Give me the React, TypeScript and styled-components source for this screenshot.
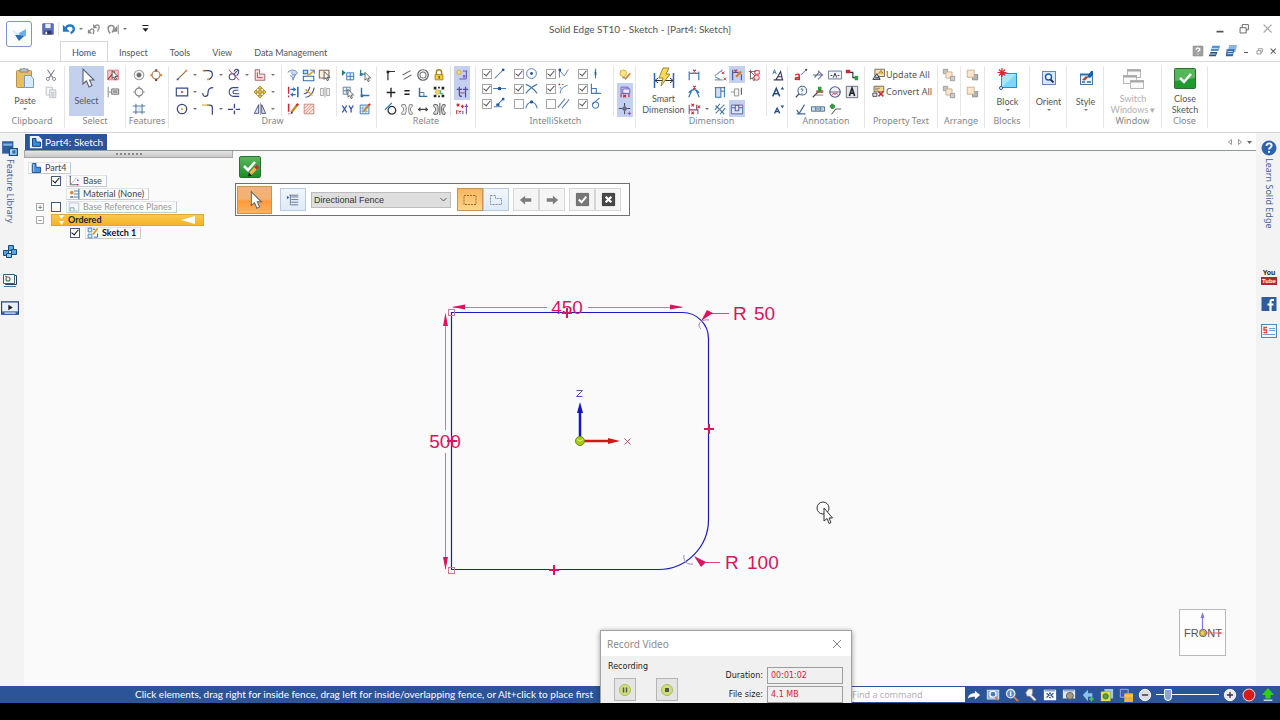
import React from 'react';
import styled, { createGlobalStyle, css } from 'styled-components';

/* ---------- palette and base ---------- */

const c = {
  brand: '#2b5499',
  navy: '#3b4684',
  blue: '#2a70b4',
  red: '#cf2632',
  orange: '#e08a35',
  gold: '#d9a92c',
  green: '#2f9b3a',
  magenta: '#d8155f',
};

const ui = `Lato, "Noto Sans", sans-serif`;
const label = `"Noto Sans", "Open Sans", sans-serif`;

const GlobalStyle = createGlobalStyle`
  * { box-sizing: border-box; }
  body { margin: 0; background: #000; font-family: ${ui}; }
  button, input, select { font-family: inherit; margin: 0; }
`;

/* ---------- icon data: [path, stroke, fill, stroke width, dashes] ---------- */

type Part = [string, string, string?, number?, string?];

const circ = (x: number, y: number, r: number) =>
  `M${x - r} ${y}a${r} ${r} 0 1 0 ${2 * r} 0a${r} ${r} 0 1 0 ${-2 * r} 0z`;
const rect = (x: number, y: number, w: number, h: number) => `M${x} ${y}h${w}v${h}h${-w}z`;
const cursor = (x: number, y: number) =>
  `M${x} ${y}v9l2 -2l1.5 3.5l1.5 -.7l-1.5 -3.3h3z`;

const icons: Record<string, Part[]> = {
  save: [[rect(2, 2, 12, 12), '#4a5ca8', '#5b6fbe'], [rect(5, 2, 6, 5), 'none', '#e9edfb'], [rect(4, 10, 8, 4), 'none', '#2b3566'], [rect(5, 11, 2, 3), 'none', '#fff']],
  undo: [['M4 8c2 -6 10 -5 9.500 1c-.5 2 -2 3 -3.500 4', '#1f78c8', 'none', 2.6], ['M1 3v8h8z', 'none', '#1f78c8']],
  undoAll: [['M3 11c1 -4 4 -4 5 -1l-1 4', '#8c8c8c', 'none', 1.5], ['M9 6c1 -4 5 -3 5 0l-2 5', '#8c8c8c', 'none', 1.5], ['M1 8v5h5z', 'none', '#8c8c8c'], ['M7 2v5h5z', 'none', '#8c8c8c']],
  redo: [['M5 13c-4 -4 -3 -9 1 -9c4 0 4 4 1 8', '#8c8c8c', 'none', 1.8], ['M13 4v7h-6z', 'none', '#8c8c8c'], ['M14 3v11', '#8c8c8c']],
  customize: [['M5 4h7', '#222', 'none', 1.2], ['M5 7h7l-3.500 4z', 'none', '#222']],
  cut: [['M4 2l6 9M12 2l-6 9', '#7d8087', 'none', 1.2], [circ(4.5, 12.5, 1.8), '#7d8087'], [circ(11.5, 12.5, 1.8), '#7d8087']],
  copy: [[rect(2.5, 2.5, 7, 9), '#b5bac2', '#f7f8fa'], [rect(6.5, 5.5, 7, 9), '#b5bac2', '#eef0f4'], ['M8 8.5h4M8 10.5h4M8 12.5h4', '#b5bac2']],
  selectFilter: [['M2 2.500h12v11h-12z', '#e06670', '#f6c9cd'], ['M2 13l8 -9', c.red, 'none', 1.3], [cursor(7, 3), '#333', '#fff', 0.9]],
  selectBox: [['M2.5 2v12M3 8h3', '#777'], [rect(6.5, 4.5, 8, 6), '#666', '#ddd'], [rect(8, 6, 5, 3), 'none', '#999']],
  hole: [[circ(8, 8, 5.5), '#a0a0a0', '#f2f2f2', 1.2], [circ(8, 8, 2.4), '#777', '#666']],
  pattern: [[circ(8, 8, 4.6), '#a87b5c', 'none', 1.3], [rect(7, 1.5, 2.4, 2.4), 'none', '#7a3d18'], [rect(7, 12.5, 2.4, 2.4), 'none', '#7a3d18'], [rect(1.5, 7, 2.4, 2.4), 'none', c.orange], [rect(12.5, 7, 2.4, 2.4), 'none', c.orange]],
  hub: [[circ(8, 8, 4.4), '#8a8a8a', '#fafafa', 1.3], ['M8 1.500v2M8 12.500v2M1.500 8h2M12.500 8h2', '#888', 'none', 1.4]],
  frame: [['M4.5 2v12M11.5 2v12M1 4.500h14M1 11.500h14', '#56789c', 'none', 1.2], [rect(6, 6, 4, 4), 'none', '#dbeafa']],
  line: [['M3 13l10 -10', '#9a7448', 'none', 1.4], [rect(2, 12, 2, 2), 'none', c.navy], [rect(12, 2, 2, 2), 'none', c.orange]],
  rectangle: [[rect(1.500, 3.500, 13, 9), c.navy, '#fff', 1.3], [rect(7, 7, 2, 2), 'none', c.red]],
  circle: [[circ(8, 8, 5.4), c.navy, 'none', 1.4], [rect(7, 7, 2, 2), 'none', c.orange]],
  arc: [['M3 3h5c7 0 6 8 1 10', c.navy, 'none', 1.4], [rect(2, 2, 2.500, 2), 'none', c.orange], [rect(7, 12, 2, 2), 'none', c.orange]],
  curve: [['M2 9c0 6 6 5 6 0c0 -5 3 -6 6 -6', c.navy, 'none', 1.4]],
  fillet: [['M7 3.500h3c2 0 3 1 3 3v8', c.navy, 'none', 1.4], ['M1 3.500h8', c.gold, 'none', 1.3]],
  trim: [[circ(6, 10, 3.500), c.navy, 'none', 1.2], ['M2 2l12 12', '#c05070', 'none', 1.2], ['M8 7l5 -5M8 4c2 -4 7 -3 5 2l-2 3', c.navy, 'none', 1.2]],
  offset: [['M13 3h-6c-6 1 -6 9 0 10h7M13 6h-4c-3 1 -3 4 0 4h5', c.navy, 'none', 1.2]],
  split: [['M8.500 2v5M8.500 10v4M1 8.500h6M10 8.500h5', c.navy, 'none', 1.5]],
  polyOffset: [['M2.500 2h5v5h6v7h-11z', '#a0606c', '#fae3e5', 1.1], ['M5 5v6h6', c.red]],
  move: [['M8 1l3 3h-2v3h3v-2l3 3l-3 3v-2h-3v3h2l-3 3l-3 -3h2v-3h-3v2l-3 -3l3 -3v2h3v-3h-2z', '#8a6d12', '#e8c43c', 0.8]],
  mirror: [['M6.500 3v10h-5zM10 3v10h4.500z', c.navy, '#dfe6f4', 1], ['M8.500 1v14', '#777', 'none', 0.8]],
  freehand: [['M2 5c4 -5 11 -2 11 1c-2 3 -8 2 -6 -1M5 8c2 4 5 4 5 0M7 11l1 3l3 -7', '#7b93c1', '#cbd8f2', 1.1]],
  cleanSketch: [[rect(1.500, 2.500, 5, 4), '#2e6eb0', '#c2ddf6', 1.2], [rect(1.500, 9.500, 12, 5), '#2e6eb0', '#fff', 1.2], ['M6 9l8 -6', c.gold, 'none', 2], ['M9 2.500h5v4', c.blue]],
  copySketch: [[rect(1.500, 2.500, 11, 9), '#865', '#fdf2df', 1.2], [cursor(7, 4), '#333', '#fff', 0.9]],
  stretch: [['M3 2v8M3 12v2', c.red, 'none', 1.6], ['M13.500 2v12', c.blue, 'none', 1.8], ['M5 5h6M5 11h6M8 3l3 2l-3 2M8 9l-2 2l2 2', c.blue, 'none', 1.2]],
  scale: [['M2 10c4 0 6 -4 7 -8M4 14c5 0 9 -5 10 -11', '#4c5ca0', 'none', 1.3], ['M4 5l8 7', c.gold, 'none', 1.6]],
  rotate: [['M3 4h3v8h-3zM10 4h3v8h-3zM8 2v12', '#aaa', 'none', 1.2]],
  pencil: [['M3 2v9M3 13v1', c.red, 'none', 1.8], ['M6 12l7 -9', '#c98a2c', 'none', 2.8], ['M5 14l1 -3l2 1.500z', 'none', '#333'], ['M12 4l2 -2', c.red, 'none', 2.4]],
  hatch: [[rect(2.500, 2.500, 11, 11), '#c27f74', '#fff0ea'], ['M3 7l4 -4M3 11l8 -8M4 13l9 -9M8 13l5 -5', '#d06a5c', 'none', 0.9]],
  gridGo: [['M1 2v7l4.500 -3.500z', 'none', '#178a80'], [rect(6.500, 5.500, 8, 8), c.blue, '#eef6ff'], ['M10.500 6v8M7 9.500h8', c.blue]],
  gridPick: [[rect(2.500, 2.500, 8, 8), '#56749c', '#eef6ff'], ['M6.500 3v7M3 6.500h7', '#56749c'], [cursor(8, 5), '#333', '#fff', 0.8]],
  xy: [['M1.500 4l5 8M6.500 4l-5 8M9 4l2.500 4l2.500 -4M11.500 8v4', '#2f4fae', 'none', 1.5]],
  originPick: [['M3 2v5h6', '#178a80', 'none', 1.4], [rect(2, 6, 3, 3), 'none', c.blue], [cursor(8, 5), '#333', '#fff', 0.8]],
  origin: [['M4 3v9h9', c.blue, 'none', 1.6], [rect(3, 11, 3, 3), 'none', c.blue]],
  gridEdit: [[rect(2.500, 3.500, 10, 10), c.blue, '#eef6ff'], ['M5.500 4v9M9 4v9M3 7h9M3 10.500h9', '#6c94c4', 'none', 0.8], ['M6 11l7 -8', '#c98a2c', 'none', 2.2], ['M12 4l2 -2', c.red, 'none', 2]],
  connect: [['M4.500 14v-10h8', '#333', 'none', 1.4], [rect(3, 3, 3, 3), 'none', '#222']],
  parallel: [['M3 8l9 -5M4 13l9 -5', '#666', 'none', 1.3]],
  concentric: [[circ(8, 8, 6), '#5d6068', 'none', 1.4], [circ(8, 8, 3.5), '#6d7078', 'none', 1.2]],
  lock: [['M5 8v-3c0 -4 6 -4 6 0v3', '#a98413', 'none', 1.6], [rect(3.500, 7.500, 9, 6), '#a98413', '#f0cb3c'], [rect(7.500, 9, 1.500, 3), 'none', '#65500f']],
  plus: [['M8 3v11M3 8.500h10', '#222', 'none', 1.6]],
  equal: [['M5 6.500h6M5 10.500h6', '#222', 'none', 1.7]],
  perp: [['M4 3v10h9', '#2d6f9f', 'none', 1.6], ['M4 8.500h5v4', '#2d6f9f']],
  rigid: [['M2 2h3v3h-3zM11 2h3v3h-3zM2 11h3v3h-3zM11 11h3v3h-3zM7 2h2v2h-2zM7 12h2v2h-2z', 'none', '#222'], [circ(6.500, 8, 2.500), c.gold, '#f0dd80'], ['M10 6v4h3', '#2a6', 'none', 1.3]],
  tangent: [[circ(9, 9.500, 4.4), '#333', 'none', 1.5], ['M1 9l8 -8', '#2b7bb8', 'none', 1.5]],
  symmetric: [['M2 3h4l1 3v5l-1 3h-4v-2l2 -2v-3l-2 -2zM14 3h-3l-1 3v5l1 3h3v-2l-2 -2v-3l2 -2z', '#777', '#f2f2f2', 1]],
  collinear: [['M3 8.500h10M5 6.500l-2 2l2 2M11 6.500l2 2l-2 2', '#444', 'none', 1.4]],
  symmetricAxis: [['M2 3h4l1 3v5l-1 3h-4v-2l2 -2v-3l-2 -2zM15 3h-3l-1 3v5l1 3h3v-2l-2 -2v-3l2 -2z', '#555', '#ddd', 1], ['M9 1v14', '#333']],
  relHandles: [['M9 3.500h5M13 3v9M5 12.500h8', '#6b54b5', 'none', 1.2], [circ(4.500, 5, 2.500), c.gold, '#f3dc84'], [rect(9, 8, 3, 3), 'none', '#8968d0']],
  relKeep: [['M5 2v9c0 2 1 2 3 2M2 5h6M12 2v12M9 5h6', '#514aa3', 'none', 1.4], ['M6 9h5', '#b052b0', 'none', 1.4]],
  relAssist: [['M2 2l3 3M5 2l-3 3M7 5h3M8.500 3v4', c.red, 'none', 1.4], ['M13 2v12M11 5h4M9 10v4', '#7850a0', 'none', 1.2], ['M2 9v5M4 10l3 3M7 10l-3 3', c.red, 'none', 1.2]],
  endpoint: [['M2 14l10 -10', '#5b81b8', 'none', 1.3], [rect(11, 2, 3, 3), 'none', '#235a9d']],
  center: [[circ(8, 8, 6), '#4a7cb8', 'none', 1.2], [circ(8, 8, 1.800), 'none', '#235a9d']],
  keyPoint: [['M3 13v-9l6 7l5 -8', '#5b81b8', 'none', 1.2], [rect(2, 2, 3, 3), 'none', '#235a9d']],
  vertical: [['M8 2v12', '#4a7cb8', 'none', 1.5], [rect(7, 6, 2, 4), 'none', '#235a9d']],
  midpoint: [['M0 8h16', '#4a7cb8', 'none', 1.3], [circ(8, 8, 2.3), 'none', '#235a9d']],
  intersect: [['M1 3c6 2 9 5 14 11M15 3c-6 2 -9 5 -14 11', '#4a7cb8', 'none', 1.5]],
  extend: [['M4 14c0 -6 4 -8 9 -10', '#4a7cb8', 'none', 1.2], [rect(2, 2, 2, 2), 'none', c.red], ['M6 3h2M4 6v2', '#555']],
  perpRel: [['M3 2v12h12M3 8h6v6', '#4a7cb8', 'none', 1.4]],
  pointOn: [['M1 12h10M5 10l7 -7', '#4a7cb8', 'none', 1.4], [rect(11, 1, 3, 3), 'none', '#235a9d'], [rect(4, 8, 4, 3), 'none', '#235a9d']],
  silhouette: [['M1 14c2 -10 12 -10 14 0', '#4a7cb8', 'none', 1.4], [circ(8, 6, 2), 'none', '#235a9d']],
  parallelRel: [['M1 13l9 -11M6 14l9 -11', '#5b81b8', 'none', 1.3]],
  tangentRel: [[circ(8, 10, 3.800), '#4a7cb8', 'none', 1.4], ['M4 9l9 -8', '#4a7cb8', 'none', 1.4]],
  bulbEdit: [[circ(6, 6, 3.800), c.gold, '#fbe68a'], ['M5 11h3', '#888', 'none', 1.500], ['M8 13l6 -7', '#c98a2c', 'none', 2]],
  alignDim: [[rect(3.500, 2.500, 8, 7), '#6b54b5', '#d9d2f4'], [rect(5.500, 4.500, 8, 5), '#6b54b5', '#eceaff'], ['M6 11l3 3M9 11l-3 3M3.500 10v4M12.500 10v4', c.red, 'none', 1.3]],
  crossHair: [['M7.500 1v13M1 7.500h13', '#4a4a66', 'none', 1.2], ['M4 7.500l3.500 -3.500l3.500 3.500l-3.500 3.500z', 'none', '#6a6a84'], ['M13 11v4M11 13h4', '#8d44a6']],
  dimDistance: [['M2.500 4v10M13.500 4v10', c.blue, 'none', 1.3], ['M3 6h10', '#333'], ['M7 2l3 3M10 2l-3 3', c.red, 'none', 1.3]],
  dimAngle: [['M2 14l4 -9M14 14l-4 -9M2 9c4 -5 8 -5 12 0', '#2a70b4', 'none', 1.3], ['M7 1l3 3M10 1l-3 3', c.red, 'none', 1.3]],
  dimCoord: [['M2.500 9h10v5M2.500 3v11M11 3v6', '#8c4b70', 'none', 1.2], ['M5 2l3 3M8 2l-3 3M5 11l3 3M8 11l-3 3M12 4l3 3M15 4l-3 3', c.red, 'none', 1.2]],
  dimChamfer: [['M2 9l9 -7M2 13.500h9M2 10l6 3', '#7a9cc0', 'none', 1.3], ['M10 4l3 3M13 4l-3 3M12 11l3 3M15 11l-3 3', c.red, 'none', 1.1]],
  dimSymmetric: [['M3 3v11h6v-11M13 2v12', '#3478b0', '#cfe2f4', 1.2], ['M2 3h12M9 7h4', '#555']],
  dimCross: [['M3 13l10 -10M3 4l10 10', '#6d7f95', 'none', 1.4], ['M2 9l6 -7M8 14l6 -7', c.blue, 'none', 1.2]],
  dimAttach: [['M3 2v12M13 7v7M3 5h7', '#46569f', 'none', 1.3], ['M5 2l3 3M8 2l-3 3', c.red, 'none', 1.3], ['M7 10l6 -6', '#dc7a27', 'none', 2.4]],
  dimRemove: [['M1 8h4M5 4.500h5v8h-5z', '#888', '#f4f4f4'], ['M13 3v8', '#555', 'none', 1.2]],
  dimRetrieve: [[rect(1.500, 3.500, 13, 10), '#54629e', '#dfe4fb'], ['M6 3v7h4v-7M2 6.500h4M10 6.500h4', '#54629e', 'none', 1.2], ['M7 4h2', c.red]],
  dimPick: [['M2 4h8M4 2v5', '#777', 'none', 1.3], [cursor(4, 4), '#333', '#fff', 0.8], ['M9 3h5v4h-5z', c.red], [circ(11, 11, 3), c.red, '#fadcdc']],
  textStyle: [['M2 7l2 -5l2 5M3 5h2', '#2a70b4', 'none', 1], ['M6 13l5 -9l2 9M8 10h5M3 13.500h11', '#39395f', 'none', 1.3]],
  textUp: [['M2 13l4 -9l4 9M4 10h5', '#274c86', 'none', 1.800], ['M11 5h4l-2 -3z', 'none', '#274c86']],
  textDown: [['M4 13l3 -6l3 6M5 11h4', '#274c86', 'none', 1.500], ['M11 4h4l-2 3z', 'none', '#274c86']],
  leader: [['M8 8l6 -6', '#6b7fa8', 'none', 1.2], ['M1.500 8.500c1 -2 4.500 -2 4.500 0v5.500M6 10.500c-6 0 -6 4.500 0 2', c.red, 'none', 1.7], [rect(13, 1, 2, 2), 'none', '#333']],
  weld: [['M2 8h12M8 3l5 5l-5 5M4 11l5 -6', '#5a6d8d', 'none', 1.2]],
  datum: [[rect(0.500, 3.500, 15, 9), '#5a6d8d', '#f4f7fb'], ['M6 11l2 -5l2 5M3 8.500h2M11 8.500h2', '#333', 'none', 1.1]],
  connector: [['M5 5h4v6h4', '#333', 'none', 1.3], [rect(1, 2, 5, 4), 'none', c.red], [rect(11, 9, 4, 5), 'none', c.green]],
  balloon: [[circ(9.5, 6.5, 5), '#4a6a94', '#f2f7fc', 1.2], ['M8 5.500c0 -2 3 -1 2 .5l-1 1.500M9 9v1', '#345', 'none', 1], ['M6 10l-4 4', '#345', 'none', 1.3]],
  callout: [['M2 14l6 -6', '#345', 'none', 1.300], [rect(6, 6, 8, 3), 'none', '#c0584a'], [rect(8, 2, 4, 6), 'none', c.green], ['M5 11.500h9', '#777']],
  datumTarget: [[circ(8, 8, 6), '#4a5a84', '#f6f8fd', 1.3], ['M2 8h12', '#4a5a84'], ['M5 11l1.500 -2l1.500 2l1.500 -2l1.500 2', c.red]],
  textBox: [[rect(1.500, 1.500, 13, 13), '#667', '#dfe6ee', 1], ['M5 12.500l3 -9l3 9M6 9.500h4', '#222', 'none', 1.800]],
  surface: [['M3 9l3 4l6 -10M3 13.500h10', '#44689a', 'none', 1.3]],
  frameTol: [[rect(0.500, 5.500, 15, 5), '#3e6282', '#cfe0ee'], ['M5.500 6v4M10.500 6v4M7 8h2M12 8h1', '#3e6282', 'none', 1.2]],
  edge: [['M4 14l5 -6h6', '#666', 'none', 1.3], [rect(3.500, 2, 3, 6), 'none', c.green], [rect(2, 3.500, 6, 3), 'none', c.green]],
  updateAll: [[rect(3.500, 1.500, 12, 9), '#555', '#fbe3a8'], ['M8 7l3 -4l3 4', '#777', '#f0b030'], ['M1 14l5 -7l4 7zM4 12h5', '#333', '#bdd3ee', 1.2]],
  convertAll: [[rect(2.500, 1.500, 12, 7), '#555', '#fbd98a'], ['M4 4h6M4 6h4', '#777'], ['M8 8l6 6M14 8l-6 6', c.red, 'none', 1.8], ['M1 10h5v4h-5z', '#333', '#e8e8e8']],
  bringFront: [[rect(1.500, 1.500, 5, 5), '#999', '#c4c4c4'], [rect(4.500, 4.500, 7, 7), '#c9a988', '#fbe7cf'], [rect(9.500, 9.500, 5, 5), '#999', '#ccc']],
  sendBack: [[rect(8.500, 7.500, 6, 6), '#888', '#b4b4b4'], [rect(2.500, 2.500, 8, 8), '#c9a988', '#fbe7cf']],
  partFile: [['M3 2h5v5h6v7h-11z', '#123f7c', '#4a90d9', 1.1], ['M3 2l2 2v9', '#bfe0ff']],
  docFile: [['M1 1h10l4 4v10h-14z', 'none', '#e9f2fb'], ['M4 4h4v4h5v5h-9z', '#123f7c', '#3f8ad6', 1.1]],
  baseIcon: [['M3 3v10h9', '#556', 'none', 1.2], ['M4 12l8 -9', '#9d62c6', 'none', 1, '2 1'], [rect(12, 12, 2, 2), 'none', c.magenta], [rect(2, 1, 2, 2), 'none', c.blue], [rect(12, 6, 2, 2), 'none', '#6a5acd']],
  material: [['M8 4h6M8 8h6M8 12h6', '#2a70b4', 'none', 1.2], [circ(5, 6, 2.5), 'none', c.orange], ['M3 12h4', '#333', 'none', 1.5], ['M14.500 1v14', '#1d5591', 'none', 1.2]],
  planes: [[rect(1.500, 2.500, 13, 11), '#a9b7cc', '#f4f7fb'], ['M3 13v-4h5v4', '#6d86ae']],
  sketchItem: [[rect(1.500, 1.500, 5, 5), '#2a70b4', '#dcecfb'], [rect(1.500, 9.500, 5, 5), '#2a70b4', '#dcecfb'], ['M9 13.500h5v-5', '#2a70b4', 'none', 1.3], ['M8 10l6 -8', '#e0962c', 'none', 2.400], ['M8 3h3', '#333']],
  list: [['M6 4.500h8M6 7.500h8M6 10.500h8M6 13.500h8', '#5a6c8e'], ['M5 2v12', '#5a6c8e'], ['M1 3l3 2l-3 2z', 'none', '#2a70b4'], ['M4 2.500h10', '#5a6c8e']],
  fence: [['M2 3.500h12v9h-12z', '#a0672a', 'none', 1, '2 1']],
  polyFence: [['M2.500 3.500h5v3h6v6h-11z', '#7a8fae', 'none', 1, '2 1']],
  back: [['M1 8l6 -5v3h7v4h-7v3z', 'none', '#7d7d7d']],
  forward: [['M15 8l-6 -5v3h-7v4h7v3z', 'none', '#7d7d7d']],
  accept: [[rect(1.500, 1.500, 13, 13), '#686868', '#777'], ['M4 8l3 3l5 -6', '#fff', 'none', 2.200]],
  cancel: [[rect(1.500, 1.500, 13, 13), '#333', '#484848'], ['M5 5l6 6M11 5l-6 6', '#fff', 'none', 2.400]],
  help: [[rect(2.500, 2.500, 11, 11), '#888', '#a2a2a2'], ['M6 6.500c0 -3 4.500 -2 4 0c0 1 -2 1 -2 2.500M8 11v1', '#fff', 'none', 1.5]],
  winBack: [['M6 2h9l-2 6h-9z', 'none', '#4d8fd0'], ['M4 9h8l-2 5h-8z', 'none', '#26547c'], ['M5 5h8M3 11.500h7', '#dfeaf6']],
  winFront: [['M6 1h9l-2 8h-9z', 'none', '#8bb4df'], ['M3 6h9l-2 8h-8z', 'none', '#2d68ac'], ['M4 8.500h6M4 11h6', '#e6f1fc']],
  minimize: [['M4 11h8', '#555', 'none', 2]],
  restore: [[rect(3.500, 6.500, 7, 6), '#666', '#fff', 1.1], ['M6 6v-3h7v6h-3', '#666', 'none', 1.1]],
  close: [['M3 3l9 9M12 3l-9 9', '#aaa', 'none', 1.6]],
  closeDark: [['M3 3l9 9M12 3l-9 9', '#555', 'none', 1.8]],
  share: [['M1 12c1 -5 4 -6 8 -6v-3l6 5l-6 5v-3c-3 0 -5 0 -8 2z', 'none', '#fff']],
  zoomArea: [[rect(1.500, 2.500, 13, 10), '#cfe0f5', '#8eb3de', 1.2], [circ(8, 7, 3.500), '#fff', '#4a7dbb', 1.4], ['M10 10l4 4', '#d57c50', 'none', 2]],
  zoom: [[circ(6.500, 6.500, 4.800), '#e1eaf6', '#5f8cc4', 1.500], ['M6.500 4v5', '#fff', 'none', 1.500], ['M10 10l5 5', '#d57c50', 'none', 2.2]],
  pan: [['M2 5l3 -4h5v5l-1 2l5 5l-2 2l-5 -5l-4 -1z', '#777', '#f1f1f1', 1]],
  fit: [[rect(1, 2, 14, 12), 'none', '#fff'], ['M2 3h12', '#8fa7cc', 'none', 2], ['M4 6l3 2l-3 3M12 6l-3 2l3 3M7 6h2M7 11h2', c.brand, 'none', 1.5]],
  rotateView: [[rect(1, 2, 14, 10), 'none', '#dfe7f4'], ['M2 3h12', '#8fa7cc', 'none', 2], [circ(9, 9, 4), '#555', '#a39a88']],
  views: [['M2 8l6 -6v4h5v4h-5v5z', 'none', '#8cc3ee'], ['M12 10v5M9.500 12.500h5', '#4fc34f', 'none', 2]],
  styleView: [['M5 1h10v11h-3v-8h-7z', 'none', '#9cc8f2'], [rect(1, 4, 11, 11), 'none', '#e7dd3b'], [circ(6.500, 9.500, 3), '#2a7a2a', '#4ca644']],
  windows: [[rect(1.500, 1.500, 9, 9), '#a9bcd8', '#3d629f'], [rect(6, 6, 10, 10), 'none', '#eeb13a'], ['M6 9h10', '#fadf9c']],
  zoomOut: [[circ(8, 8, 6.5), '#fff', '#dadde2'], ['M4.500 8h7', '#555', 'none', 2]],
  zoomIn: [[circ(8, 8, 6.5), '#fff', '#e8eaf0'], ['M4.500 8h7M8 4.500v7', '#333', 'none', 1.5]],
  record: [[circ(8, 8, 6.8), '#f2c2c2', '#d91a1a', 1.2]],
  upload: [['M8 0l7 8h-4v4h-6v-4h-4z', 'none', '#2fd116'], ['M3 14h10', '#d8f0d4', 'none', 1.5]],
  railLibrary: [[rect(1, 2, 10, 11), 'none', '#2b5f9e'], ['M2 5h8', '#7fb2e4', 'none', 2], [rect(7.500, 8.500, 7, 6), '#1d4c86', '#bfe0fa', 1.2], [rect(10, 10, 3, 3), 'none', c.blue]],
  railParts: [[rect(6.500, 1.500, 5, 5), '#174a7c', '#5aa6e0'], [rect(9.500, 5.500, 5, 5), '#174a7c', '#5aa6e0'], [rect(1.500, 6.500, 5, 5), '#174a7c', '#5aa6e0'], [rect(4.500, 9.500, 5, 4), '#174a7c', '#8cc8f2']],
  railSensors: [[rect(3.500, 3.500, 11, 9), '#246', '#fff'], [rect(1.500, 2.500, 11, 9), '#3a5f86', '#eef5fb'], [circ(6, 7, 2), '#2a8a4a', '#fff', 1.2], ['M3 4l2 1', c.red], ['M2 14.500h12', '#4a7d9c']],
  railVideo: [[rect(0.500, 2.500, 15, 11), '#24456e', '#e8f1fa'], ['M6.500 5l4 2.500l-4 2.500z', 'none', '#222'], [rect(1, 11, 14, 3), 'none', '#2b5f9e'], ['M3 12.500h10', '#fff']],
  learn: [[circ(8, 8, 7), '#2b5fa8', '#2d62b0'], ['M5.500 6c0 -4 6 -3 5 0c0 1.500 -2.500 1.500 -2.500 3.500M8 11v1.800', '#fff', 'none', 1.9]],
  facebook: [[rect(0.500, 1, 15, 14), 'none', '#2f5c9d'], ['M13 4h-2c-1 0 -1.500 .5 -1.500 2v9M6.500 8.500h6', '#fff', 'none', 2.2]],
  news: [[rect(0.500, 1.500, 15, 13), '#4a8abf', '#f3faff', 1.2], ['M6 4.500h-3v2.500h2.500v2.500h-3', '#d2502a', 'none', 1.3], ['M8 5.500h6M8 7.500h6M2 11.500h12', '#6aa3d0']],
};

const Svg = styled.svg`
  display: block;
  flex: none;
`;

const Icon = ({ name, size = 16 }: { name: string; size?: number }) => (
  <Svg width={size} height={size} viewBox="0 0 16 16" aria-hidden="true">
    {icons[name].map(([d, stroke, fill = 'none', w = 1, dash], i) => (
      <path key={i} d={d} stroke={stroke} fill={fill} strokeWidth={w} strokeDasharray={dash} />
    ))}
  </Svg>
);

/* ---------- shared controls ---------- */

const plain = css`
  appearance: none;
  border: 0;
  padding: 0;
  background: none;
  display: flex;
  align-items: center;
  justify-content: center;
`;

const IconButton = styled.button<{ $on?: boolean; $w?: number }>`
  ${plain}
  width: ${(p) => p.$w ?? 16}px;
  height: 17px;
  flex: none;
  background: ${(p) => (p.$on ? '#c3d0f0' : 'transparent')};
`;

const Caret = styled.span`
  display: block;
  width: 0;
  border: 2px solid transparent;
  border-top-color: #777;
  border-bottom: 0;
`;

const Check = styled.input<{ $soft?: boolean }>`
  appearance: none;
  flex: none;
  width: 10px;
  height: 10px;
  margin: 0;
  border: 1px solid ${(p) => (p.$soft ? '#a5a5a5' : '#445a7c')};
  background: #fff;
  display: flex;
  align-items: center;
  justify-content: center;
  &:checked::before {
    content: '';
    width: 3px;
    height: 6px;
    margin-bottom: 2px;
    border: solid ${(p) => (p.$soft ? '#555' : '#111')};
    border-width: 0 1px 1px 0;
    transform: rotate(40deg);
  }
`;

const Tool = ({ name, on, w }: { name: string; on?: boolean; w?: number }) => (
  <IconButton type="button" aria-label={name} $on={on} $w={w}>
    <Icon name={name} size={14} />
  </IconButton>
);

/* ---------- window frame ---------- */

const Page = styled.div`
  min-height: 100vh;
  display: flex;
  flex-direction: column;
  padding: 16px 0 17px;
  background: #000;
`;

const Window = styled.div`
  position: relative;
  flex: 1;
  display: flex;
  flex-direction: column;
  background: #fff;
  overflow: hidden;
`;

const Header = styled.header`
  display: flex;
  flex-direction: column;
  height: 46px;
  border-bottom: 1px solid #d5d7dc;
`;

const AppButton = styled.button`
  ${plain}
  position: absolute;
  top: 5px;
  left: 6px;
  width: 26px;
  height: 26px;
  border: 1px solid #7b98c4;
  border-radius: 3px;
  background: #fbfdff;
`;

const TitleBar = styled.div`
  display: grid;
  grid-template-columns: 1fr auto 1fr;
  align-items: center;
  height: 26px;
`;

const QuickAccess = styled.div`
  display: flex;
  align-items: center;
  gap: 2px;
  padding-left: 40px;
`;

const Rule = styled.span`
  width: 1px;
  height: 14px;
  flex: none;
  background: #e3e3e3;
`;

const Title = styled.h1`
  margin: 0;
  font-size: 10px;
  font-weight: 400;
  color: #555;
  white-space: nowrap;
`;

const WindowButtons = styled.div<{ $gap: number; $end?: number }>`
  display: flex;
  justify-content: flex-end;
  align-items: center;
  gap: ${(p) => p.$gap}px;
  padding-right: ${(p) => p.$end ?? 0}px;
`;

const TabRow = styled.div`
  display: flex;
  align-items: stretch;
  justify-content: space-between;
  height: 20px;
  padding-left: 60px;
`;

const Tabs = styled.nav`
  display: flex;
`;

const Tab = styled.a<{ $active?: boolean }>`
  display: flex;
  align-items: center;
  padding: 2px 11px 0;
  height: 20px;
  font-size: 9px;
  color: ${(p) => (p.$active ? '#2b5499' : '#555')};
  text-decoration: none;
  ${(p) =>
    p.$active &&
    css`
      border: 1px solid #d5d7dc;
      border-bottom: 0;
      background: #fff;
      margin-bottom: -1px;
    `}
`;

/* ---------- ribbon ---------- */

const Ribbon = styled.div`
  display: flex;
  height: 71px;
  padding: 4px 0;
  border-bottom: 1px solid #d3d6d8;
  background: #fff;
`;

const Group = styled.section<{ $w: number }>`
  display: flex;
  flex-direction: column;
  flex: 0 0 ${(p) => p.$w}px;
  border-right: 1px solid #e6e6e6;
`;

const GroupBody = styled.div<{ $pad?: number }>`
  display: flex;
  height: 50px;
  padding-left: ${(p) => p.$pad ?? 4}px;
`;

const GroupName = styled.h2`
  margin: 0;
  height: 12px;
  font-family: ${label};
  font-size: 9px;
  line-height: 10px;
  font-weight: 400;
  text-align: center;
  color: #868686;
  white-space: nowrap;
`;

const Cols = styled.div<{ $n: number; $col?: number }>`
  display: grid;
  grid-template-columns: repeat(${(p) => p.$n}, ${(p) => p.$col ?? 16}px);
  grid-auto-rows: 17px;
  align-content: start;
  justify-items: start;
`;

const Divider = styled.span`
  width: 1px;
  height: 50px;
  margin: 0 3px;
  flex: none;
  background: #e6e6e6;
`;

const Drop = styled.div`
  display: flex;
  align-items: center;
  gap: 3px;
`;

const BigButton = styled.button<{ $on?: boolean; $w: number; $dim?: boolean }>`
  ${plain}
  flex-direction: column;
  justify-content: flex-start;
  gap: 2px;
  flex: none;
  width: ${(p) => p.$w}px;
  height: 50px;
  font-size: 9px;
  line-height: 11px;
  color: ${(p) => (p.$dim ? '#b0b0b0' : '#555')};
  background: ${(p) => (p.$on ? '#c3d1ef' : 'transparent')};
`;

const BigText = styled.span<{ $lines?: boolean }>`
  min-height: 12px;
  padding-top: ${(p) => (p.$lines ? 1 : 3)}px;
`;

const SnapGrid = styled.div`
  display: grid;
  grid-template-columns: repeat(4, 32px);
  grid-auto-rows: 15px;
  align-content: start;
`;

const Snap = styled.label`
  display: flex;
  align-items: center;
  gap: 1px;
`;

const TextTool = styled.button`
  ${plain}
  justify-content: flex-start;
  gap: 1px;
  height: 17px;
  font-family: ${label};
  font-size: 9px;
  color: #555;
  white-space: nowrap;
`;

const Stack = styled.div`
  display: flex;
  flex-direction: column;
`;

/* ---------- work area ---------- */

const Work = styled.div`
  flex: 1;
  display: flex;
  min-height: 0;
`;

const Rail = styled.aside<{ $side: 'left' | 'right' }>`
  width: 24px;
  flex: none;
  display: flex;
  flex-direction: column;
  align-items: center;
  gap: ${(p) => (p.$side === 'left' ? 12 : 11)}px;
  padding-top: ${(p) => (p.$side === 'left' ? 6 : 7)}px;
  padding-right: ${(p) => (p.$side === 'left' ? 4 : 0)}px;
  padding-left: ${(p) => (p.$side === 'left' ? 0 : 2)}px;
  background: #f3f3f4;
`;

const RailTab = styled.button<{ $h: number }>`
  ${plain}
  flex-direction: column;
  justify-content: flex-start;
  gap: 2px;
  height: ${(p) => p.$h}px;
  font-family: ${label};
  font-size: 9px;
  line-height: 12px;
  color: #46628f;
`;

const RailText = styled.span`
  writing-mode: vertical-rl;
  white-space: nowrap;
`;

const RailButton = styled.button`
  ${plain}
  width: 18px;
  height: 16px;
`;

const YouTube = styled.a`
  display: flex;
  flex-direction: column;
  align-items: center;
  width: 16px;
  height: 16px;
  font-family: "Liberation Sans", sans-serif;
  font-size: 7px;
  line-height: 8px;
  font-weight: 700;
  color: #222;
  text-decoration: none;
`;

const Tube = styled.span`
  width: 16px;
  font-size: 6px;
  line-height: 8px;
  text-align: center;
  color: #fff;
  background: #b3282d;
`;

const Center = styled.main`
  flex: 1;
  min-width: 0;
  display: flex;
  flex-direction: column;
`;

const DocTabs = styled.div`
  display: flex;
  justify-content: space-between;
  align-items: stretch;
  height: 18px;
  border-bottom: 1px solid #8d9a98;
`;

const DocTab = styled.button`
  ${plain}
  gap: 2px;
  margin: 1px 0 0 1px;
  padding: 0 4px;
  font-size: 10px;
  color: #fff;
  background: ${c.brand};
`;

const DocNav = styled.div`
  display: flex;
  align-items: center;
  padding-right: 3px;
`;

const Body = styled.div`
  flex: 1;
  display: flex;
  min-height: 0;
  background: #fafafa;
`;

const TreePanel = styled.div`
  width: 209px;
  flex: none;
`;

const Grip = styled.div`
  height: 7px;
  display: flex;
  justify-content: center;
  align-items: center;
  border: 1px solid #a8a8a8;
  border-top: 0;
  background: linear-gradient(#e6e6e6, #c8c8c8);
  &::before {
    content: '';
    width: 26px;
    border-top: 2px dotted #888;
  }
`;

const Tree = styled.ul`
  list-style: none;
  margin: 0;
  padding: 3px 0 0 4px;
`;

const TreeRow = styled.li<{ $indent: number }>`
  display: flex;
  align-items: center;
  height: 13px;
  gap: 5px;
  padding-left: ${(p) => p.$indent}px;
`;

const Node = styled.span<{ $bold?: boolean; $dim?: boolean }>`
  display: flex;
  align-items: center;
  gap: 3px;
  height: 12px;
  padding: 0 4px 0 1px;
  font-size: 9px;
  line-height: 11px;
  white-space: nowrap;
  font-weight: ${(p) => (p.$bold ? 700 : 400)};
  color: ${(p) => (p.$dim ? '#999' : p.$bold ? '#111' : '#444')};
  border: 1px solid #c4cad2;
  border-left-color: #e0e4e8;
  border-top-color: #e0e4e8;
  background: #fbfcfd;
`;

const Expander = styled.button`
  ${plain}
  width: 8px;
  height: 8px;
  margin-right: 2px;
  border: 1px solid #aaa;
  font-size: 8px;
  line-height: 6px;
  color: #444;
  background: #fff;
`;

const Ordered = styled.span`
  display: flex;
  align-items: center;
  justify-content: space-between;
  width: 153px;
  height: 12px;
  padding: 0 8px 0 7px;
  font-size: 9px;
  line-height: 10px;
  font-weight: 700;
  color: #222;
  border: 1px solid #dba63a;
  background: linear-gradient(#fbc850, #f5b424);
`;

const OrderedName = styled.span`
  display: flex;
  align-items: center;
  gap: 4px;
`;

const Flag = styled.span`
  border: 4px solid transparent;
  border-left: 0;
  border-right: 14px solid #fff;
`;

const View = styled.div`
  position: relative;
  flex: 1;
  min-width: 0;
  padding: 5px 2px;
`;

const GreenButton = styled.button`
  ${plain}
  width: 22px;
  height: 22px;
  flex: none;
  border: 1px solid #27702e;
  border-radius: 2px;
  background: linear-gradient(#5ab65e, #1d8c28);
`;

const CommandBar = styled.div`
  display: flex;
  align-items: center;
  width: max-content;
  height: 33px;
  margin-top: 5px;
  padding: 0 8px 0 1px;
  gap: 4px;
  border: 1px solid #6e7074;
  background: #fff;
`;

const ToolCell = styled.button<{ $tone?: 'orange' | 'amber' | 'blue' | 'grey'; $w?: number; $h?: number }>`
  ${plain}
  width: ${(p) => p.$w ?? 26}px;
  height: ${(p) => p.$h ?? 23}px;
  border: 1px solid ${(p) => (p.$tone === 'orange' || p.$tone === 'amber' ? '#c59458' : p.$tone === 'blue' ? '#b9cbe3' : '#d6d6d6')};
  background: ${(p) =>
    p.$tone === 'orange'
      ? 'linear-gradient(#f3b274 45%, #ff9a3c 55%, #ffb35c)'
      : p.$tone === 'amber'
        ? 'linear-gradient(#f7b65c, #ffd68c)'
        : p.$tone === 'blue'
          ? 'linear-gradient(#f1f6fc, #dfeaf8)'
          : '#f5f5f5'};
`;

const Pair = styled.div`
  display: flex;
`;

const Solo = styled.div`
  display: flex;
  margin: 0 1px 0 4px;
`;

const FenceField = styled.div`
  display: flex;
  position: relative;
  align-items: center;
  margin-right: 2px;
`;

const FenceSelect = styled.select`
  appearance: none;
  width: 140px;
  height: 16px;
  padding: 0 2px;
  border: 1px solid #bcbcbc;
  border-radius: 0;
  font-family: "Liberation Sans", sans-serif;
  font-size: 9px;
  color: #333;
  background: #dedede;
`;

const Chevron = styled.svg`
  position: absolute;
  right: 4px;
  pointer-events: none;
`;

const Drawing = styled.svg`
  position: absolute;
  top: 139px;
  left: 187px;
  font-family: "Liberation Sans", sans-serif;
`;

const ViewCube = styled.svg`
  position: absolute;
  right: 30px;
  bottom: 30px;
  font-family: "Liberation Sans", sans-serif;
`;

/* ---------- status bar ---------- */

const StatusBar = styled.footer`
  display: flex;
  align-items: center;
  height: 17px;
  padding: 0 4px 0 135px;
  background: ${c.brand};
`;

const Prompt = styled.p`
  flex: 1;
  min-width: 0;
  margin: 0;
  overflow: hidden;
  font-size: 10px;
  line-height: 17px;
  color: #fff;
  white-space: nowrap;
`;

const Find = styled.input`
  width: 126px;
  height: 15px;
  padding: 0 4px 0 13px;
  border: 0;
  font-family: ${label};
  font-size: 9px;
  background: #fff;
  &::placeholder { color: #aeb2b8; }
`;

const StatusTools = styled.div`
  display: flex;
  align-items: center;
  gap: 3px;
  padding-left: 1px;
`;

const StatusButton = styled.button`
  ${plain}
  width: 16px;
  height: 16px;
`;

const Slider = styled.input`
  appearance: none;
  width: 63px;
  height: 14px;
  background: linear-gradient(#fff, #fff) center / 100% 1px no-repeat;
  &::-webkit-slider-thumb {
    appearance: none;
    width: 8px;
    height: 12px;
    border: 1px solid #fff;
    border-radius: 1px 1px 4px 4px;
    background: #8ba6ce;
  }
`;

/* ---------- recorder dialog ---------- */

const Recorder = styled.section`
  position: absolute;
  left: calc(50% - 40px);
  bottom: 0;
  width: 252px;
  height: 73px;
  display: flex;
  flex-direction: column;
  border: 1px solid #a2a2a2;
  border-bottom: 0;
  background: #f0f0f0;
  box-shadow: 0 1px 5px rgba(0, 0, 0, 0.4);
  overflow: hidden;
`;

const RecorderHead = styled.div`
  display: flex;
  align-items: center;
  justify-content: space-between;
  height: 25px;
  flex: none;
  padding: 0 8px 0 6px;
  font-family: ${label};
  font-size: 10px;
  color: #8c8c8c;
  background: #fff;
`;

const RecorderBody = styled.div`
  display: flex;
  justify-content: space-between;
  padding: 5px 8px 0 7px;
  font-family: "DejaVu Sans", sans-serif;
  font-size: 8px;
  line-height: 11px;
  color: #222;
`;

const RecordButtons = styled.div`
  display: flex;
  gap: 20px;
  padding: 6px 0 0 6px;
`;

const RecordButton = styled.button`
  ${plain}
  width: 22px;
  height: 23px;
  border: 1px solid #b5b5b5;
  background: #e4e4e4;
`;

const Fields = styled.div`
  display: flex;
  flex-direction: column;
  gap: 2px;
  padding-top: 6px;
`;

const Field = styled.label`
  display: flex;
  align-items: center;
  justify-content: flex-end;
  gap: 4px;
`;

const FieldValue = styled.input`
  width: 76px;
  height: 17px;
  padding: 0 3px;
  border: 1px solid #9d9d9d;
  font-size: 8px;
  color: #e0202c;
  background: #f0f0f0;
`;

/* ---------- larger drawings ---------- */

const ArrowGlyph = ({ size = 24 }: { size?: number }) => (
  <Svg width={size} height={size} viewBox="0 0 24 24" aria-hidden="true">
    <path d="M8 3v15l3.500 -3l2.500 6l3 -1.500l-2.500 -5.500h4.500z" fill="#fff" stroke="#5b6270" strokeWidth="1.1" />
  </Svg>
);

const PasteGlyph = () => (
  <Svg width="24" height="24" viewBox="0 0 24 24" aria-hidden="true">
    <rect x="3.500" y="4.500" width="15" height="17" rx="1" fill="#e9bf5e" stroke="#b39150" />
    <path d="M7 5v-2h3l1 -1l1 1h3v3h-8z" fill="#bfc3c9" stroke="#777" strokeWidth=".8" />
    <path d="M11.500 9.500h6l3 3v9h-9z" fill="#d9e9fb" stroke="#7a9bc6" />
  </Svg>
);

const SmartGlyph = () => (
  <Svg width="24" height="24" viewBox="0 0 24 24" aria-hidden="true">
    <path d="M2.500 7v15M21.500 7v15" stroke="#2e66ae" strokeWidth="1.5" />
    <path d="M3 14.500h18M6 12l-3 2.500l3 2.500M18 12l3 2.500l-3 2.500" stroke="#333" fill="none" />
    <path d="M11 2h6l-3 6h4l-9 12l2 -8h-4z" fill="#fbdb55" stroke="#8d7a2c" strokeWidth=".9" />
  </Svg>
);

const BlockGlyph = () => (
  <Svg width="24" height="25" viewBox="0 0 24 25" aria-hidden="true">
    <rect x="5.500" y="7.500" width="15" height="14" fill="#7fd6fb" stroke="#2f8fc4" />
    <path d="M6 8h14l-14 13z" fill="#a9e6ff" />
    <path d="M6 2v9M1.500 6.500h9M3 3.500l6 6M9 3.500l-6 6" stroke="#d9272e" strokeWidth="1.2" />
    <circle cx="5" cy="22" r="1.500" fill="#fff" stroke="#2b5499" />
  </Svg>
);

const OrientGlyph = () => (
  <Svg width="24" height="25" viewBox="0 0 24 25" aria-hidden="true">
    <rect x="5.500" y="5.500" width="13" height="13" fill="#d6e8fb" stroke="#6a86b4" />
    <circle cx="11.500" cy="11" r="3" fill="#eef8ff" stroke="#1d5ca8" strokeWidth="1.400" />
    <path d="M13.500 13.500l3 3" stroke="#333" strokeWidth="1.800" />
  </Svg>
);

const StyleGlyph = () => (
  <Svg width="24" height="25" viewBox="0 0 24 25" aria-hidden="true">
    <rect x="6.500" y="8.500" width="12" height="10" fill="#e8f3fd" stroke="#47729f" />
    <path d="M6 8.500h13" stroke="#2a70b4" strokeWidth="2" />
    <path d="M8 16h3M13 16h4" stroke="#2a70b4" strokeWidth="1.500" />
    <path d="M8 14l4 -4l2 1.500l-3 3z" fill="#a84a2a" />
    <path d="M13 11l4 -6h2v4l-3 3z" fill="#1f5da6" />
  </Svg>
);

const WindowsGlyph = () => (
  <Svg width="24" height="24" viewBox="0 0 24 24" aria-hidden="true">
    {[[6, 3], [2, 9], [9, 14]].map(([x, y]) => (
      <g key={x}>
        <rect x={x + 0.5} y={y + 0.5} width="13" height="8" fill="#fafafa" stroke="#b9b9b9" />
        <path d={`M${x} ${y + 1.5}h14`} stroke="#a8a8a8" strokeWidth="2" />
      </g>
    ))}
  </Svg>
);

const CloseGlyph = () => (
  <Svg width="24" height="24" viewBox="0 0 24 24" aria-hidden="true">
    <rect x="1.500" y="2.500" width="21" height="20" rx="1" fill="#1f9a2c" stroke="#2b6e30" />
    <path d="M2 3h20v9l-20 3z" fill="#55b75a" />
    <path d="M7 12l4 4l7 -8" stroke="#fff" strokeWidth="2.500" fill="none" />
  </Svg>
);

const FinishGlyph = () => (
  <Svg width="20" height="20" viewBox="0 0 20 20" aria-hidden="true">
    <path d="M4 9l4 4l7 -8" stroke="#fff" strokeWidth="2.600" fill="none" />
    <path d="M10 17l6 -6" stroke="#f0b44c" strokeWidth="3.400" />
    <path d="M8 19.500l1 -4l3 3z" fill="#222" />
    <path d="M15.500 11.500l2.500 -2.500" stroke="#c92a40" strokeWidth="3.600" />
  </Svg>
);

const OrderMark = () => (
  <Svg width="5" height="10" viewBox="0 0 5 10" aria-hidden="true">
    <path d="M0 0h5l-2.500 4zM0 6h5l-2.500 4z" fill="#fff" />
  </Svg>
);

const Big = ({ w, text, glyph, on, dim, drop, lines }: {
  w: number; text: React.ReactNode; glyph: React.ReactNode; on?: boolean; dim?: boolean; drop?: boolean; lines?: boolean;
}) => (
  <BigButton type="button" $w={w} $on={on} $dim={dim}>
    {glyph}
    <BigText $lines={lines}>{text}</BigText>
    {drop && <Caret />}
  </BigButton>
);

const Plus = ({ x, y }: { x: number; y: number }) => (
  <path d={`M${x - 5} ${y}h10M${x} ${y - 5}v10`} stroke={c.magenta} strokeWidth="2" />
);

const SketchDrawing = () => (
  <Drawing width="420" height="300" viewBox="420 290 420 300" role="img" aria-label="Sketch">
    <path d="M451.500 312.500H682.500A26 26 0 0 1 708.500 338.500V519.500A50 50 0 0 1 658.500 569.500H451.500Z" fill="none" stroke="#1b1bb8" strokeWidth="1.200" />
    <g fill="none" stroke="#c878a2">
      <path d="M453 307.500H547M588 307.500H682M445.500 314V430M445.500 453V569" />
      <path d="M710 313.500H729M703 562.500H720" stroke={c.magenta} strokeWidth=".8" />
      <rect x="448.500" y="309.500" width="6" height="6" />
      <rect x="448.500" y="567.500" width="6" height="6" />
      <path d="M709 320c-5 -1 -10 2 -10 5c0 2 1 3 2 4M684 555c-1 6 3 10 9 9" stroke="#a97fc0" />
    </g>
    <g fill={c.magenta}>
      <path d="M452 307l13 -2.500v5zM683 307l-13 -2.500v5zM445.500 313l-2.500 13h5zM445.500 570l-2.500 -13h5z" />
      <path d="M701 321l6 -11l6 3zM694 556l12 6l-5 5z" />
    </g>
    <Plus x={567} y={313} />
    <Plus x={452} y={441} />
    <Plus x={709} y={429} />
    <Plus x={554} y={570} />
    <g fill={c.magenta} fontSize="19">
      <text x="567" y="314" textAnchor="middle">450</text>
      <text x="445" y="448" textAnchor="middle">500</text>
      <text x="733" y="320">R</text>
      <text x="754" y="320">50</text>
      <text x="725" y="569">R</text>
      <text x="747" y="569">100</text>
    </g>
    <path d="M580 441v-31" stroke="#1414c8" strokeWidth="2.500" />
    <path d="M580 402l-3 11h6z" fill="#1414c8" />
    <path d="M580 441h30" stroke="#d01818" strokeWidth="2.500" />
    <path d="M620 441l-12 -3v6z" fill="#d01818" />
    <circle cx="580" cy="441" r="4.500" fill="#a8cc14" stroke="#6c8d10" />
    <path d="M577 439.500l3 1.500l3 -1.500" stroke="#eaf58a" fill="none" />
    <path d="M576.500 390.500h6l-6 6h6" stroke="#5454b8" fill="none" />
    <path d="M624.500 438.500l6 6M630.500 438.500l-6 6" stroke="#c05070" fill="none" />
    <circle cx="823" cy="508" r="6" fill="none" stroke="#333" />
    <path d="M824 508v13l3 -2.500l2 5l2 -1l-2 -4.500h3.500z" fill="#fff" stroke="#333" />
  </Drawing>
);

/* ---------- data ---------- */

const drawTools: [string, boolean][] = [
  ['line', true], ['arc', true], ['trim', true], ['polyOffset', true],
  ['rectangle', true], ['curve', false], ['offset', false], ['move', true],
  ['circle', true], ['fillet', true], ['split', false], ['mirror', true],
];
const drawEdit = ['freehand', 'cleanSketch', 'copySketch', 'stretch', 'scale', 'rotate', 'pencil', 'hatch'];
const drawGrid = ['gridGo', 'originPick', 'gridPick', 'origin', 'xy', 'gridEdit'];
const relate = ['connect', 'parallel', 'concentric', 'lock', 'plus', 'equal', 'perp', 'rigid', 'tangent', 'symmetric', 'collinear', 'symmetricAxis'];
const snaps: [string, boolean][] = [
  ['endpoint', true], ['center', true], ['keyPoint', true], ['vertical', true],
  ['midpoint', true], ['intersect', true], ['extend', true], ['perpRel', true],
  ['pointOn', true], ['silhouette', false], ['parallelRel', false], ['tangentRel', true],
];
const annotations = ['leader', 'weld', 'datum', 'connector', 'balloon', 'callout', 'datumTarget', 'textBox', 'surface', 'frameTol', 'edge'];
const statusTools = ['share', 'zoomArea', 'zoom', 'pan', 'fit', 'rotateView', 'views', 'styleView', 'windows'];

const RibbonBar = () => (
  <Ribbon>
    <Group $w={65}>
      <GroupBody $pad={7}>
        <Big w={36} text="Paste" glyph={<PasteGlyph />} drop />
        <Cols $n={1}><Tool name="cut" /><Tool name="copy" /></Cols>
      </GroupBody>
      <GroupName>Clipboard</GroupName>
    </Group>
    <Group $w={61}>
      <GroupBody>
        <Big w={35} text="Select" glyph={<ArrowGlyph />} on />
        <Cols $n={1} $col={17}><Tool name="selectFilter" w={17} /><Tool name="selectBox" w={17} /></Cols>
      </GroupBody>
      <GroupName>Select</GroupName>
    </Group>
    <Group $w={43}>
      <GroupBody $pad={5}>
        <Cols $n={2} $col={17}>
          <Tool name="hole" /><Tool name="pattern" /><Tool name="hub" /><span /><Tool name="frame" />
        </Cols>
      </GroupBody>
      <GroupName>Features</GroupName>
    </Group>
    <Group $w={208}>
      <GroupBody $pad={5}>
        <Cols $n={4} $col={26}>
          {drawTools.map(([n, d]) => <Drop key={n}><Tool name={n} />{d && <Caret />}</Drop>)}
        </Cols>
        <Divider />
        <Cols $n={3}>{drawEdit.map((n) => <Tool key={n} name={n} />)}</Cols>
        <Divider />
        <Cols $n={2} $col={17}>{drawGrid.map((n) => <Tool key={n} name={n} />)}</Cols>
      </GroupBody>
      <GroupName>Draw</GroupName>
    </Group>
    <Group $w={99}>
      <GroupBody $pad={6}>
        <Cols $n={4}>{relate.map((n) => <Tool key={n} name={n} />)}</Cols>
        <Divider />
        <Cols $n={1}><Tool name="relHandles" on /><Tool name="relKeep" on /><Tool name="relAssist" /></Cols>
      </GroupBody>
      <GroupName>Relate</GroupName>
    </Group>
    <Group $w={160}>
      <GroupBody $pad={6}>
        <SnapGrid>
          {snaps.map(([n, v]) => (
            <Snap key={n}><Check type="checkbox" $soft defaultChecked={v} aria-label={n} /><Icon name={n} size={13} /></Snap>
          ))}
        </SnapGrid>
        <Divider />
        <Cols $n={1}><Tool name="bulbEdit" /><Tool name="alignDim" on /><Tool name="crossHair" on /></Cols>
      </GroupBody>
      <GroupName>IntelliSketch</GroupName>
    </Group>
    <Group $w={152}>
      <GroupBody $pad={5}>
        <Big w={45} lines text={<>Smart<br />Dimension</>} glyph={<SmartGlyph />} />
        <Cols $n={1} $col={26}>
          <Tool name="dimDistance" /><Tool name="dimAngle" /><Drop><Tool name="dimCoord" /><Caret /></Drop>
        </Cols>
        <Cols $n={3} $col={17}>
          <Tool name="dimChamfer" /><Tool name="dimAttach" on /><Tool name="dimPick" />
          <Tool name="dimSymmetric" /><Tool name="dimRemove" /><span />
          <Tool name="dimCross" /><Tool name="dimRetrieve" on />
        </Cols>
        <Divider />
        <Cols $n={1}><Tool name="textStyle" /><Tool name="textUp" /><Tool name="textDown" /></Cols>
      </GroupBody>
      <GroupName>Dimension</GroupName>
    </Group>
    <Group $w={77}>
      <GroupBody $pad={5}>
        <Cols $n={4} $col={17}>{annotations.map((n) => <Tool key={n} name={n} />)}</Cols>
      </GroupBody>
      <GroupName>Annotation</GroupName>
    </Group>
    <Group $w={73}>
      <GroupBody $pad={7}>
        <Stack>
          <TextTool type="button"><Icon name="updateAll" size={13} />Update All</TextTool>
          <TextTool type="button"><Icon name="convertAll" size={13} />Convert All</TextTool>
        </Stack>
      </GroupBody>
      <GroupName>Property Text</GroupName>
    </Group>
    <Group $w={47}>
      <GroupBody $pad={3}>
        <Cols $n={1}><Tool name="bringFront" /><Tool name="bringFront" /></Cols>
        <Divider />
        <Cols $n={1}><Tool name="sendBack" /><Tool name="sendBack" /></Cols>
      </GroupBody>
      <GroupName>Arrange</GroupName>
    </Group>
    <Group $w={45}>
      <GroupBody><Big w={37} text="Block" glyph={<BlockGlyph />} drop /></GroupBody>
      <GroupName>Blocks</GroupName>
    </Group>
    <Group $w={37}>
      <GroupBody $pad={1}><Big w={35} text="Orient" glyph={<OrientGlyph />} drop /></GroupBody>
    </Group>
    <Group $w={37}>
      <GroupBody $pad={1}><Big w={35} text="Style" glyph={<StyleGlyph />} drop /></GroupBody>
    </Group>
    <Group $w={58}>
      <GroupBody $pad={4}>
        <Big w={50} dim lines text={<>Switch<br />Windows ▾</>} glyph={<WindowsGlyph />} />
      </GroupBody>
      <GroupName>Window</GroupName>
    </Group>
    <Group $w={46}>
      <GroupBody $pad={4}>
        <Big w={38} lines text={<>Close<br />Sketch</>} glyph={<CloseGlyph />} />
      </GroupBody>
      <GroupName>Close</GroupName>
    </Group>
  </Ribbon>
);

const FeatureTree = () => (
  <TreePanel>
    <Grip />
    <Tree>
      <TreeRow $indent={0}><Node><Icon name="partFile" size={12} />Part4</Node></TreeRow>
      <TreeRow $indent={23}><Check type="checkbox" defaultChecked aria-label="Base" /><Node><Icon name="baseIcon" size={12} />Base</Node></TreeRow>
      <TreeRow $indent={38}><Node><Icon name="material" size={12} />Material (None)</Node></TreeRow>
      <TreeRow $indent={8}>
        <Expander type="button" aria-label="Expand">+</Expander>
        <Check type="checkbox" aria-label="Base Reference Planes" />
        <Node $dim><Icon name="planes" size={12} />Base Reference Planes</Node>
      </TreeRow>
      <TreeRow $indent={8}>
        <Expander type="button" aria-label="Collapse">−</Expander>
        <Ordered><OrderedName><OrderMark />Ordered</OrderedName><Flag /></Ordered>
      </TreeRow>
      <TreeRow $indent={42}><Check type="checkbox" defaultChecked aria-label="Sketch 1" /><Node $bold><Icon name="sketchItem" size={12} />Sketch 1</Node></TreeRow>
    </Tree>
  </TreePanel>
);

const Commands = () => (
  <CommandBar>
    <ToolCell type="button" aria-label="Select" $tone="orange" $w={35} $h={28}><ArrowGlyph size={22} /></ToolCell>
    <Solo><ToolCell type="button" aria-label="Options" $tone="blue"><Icon name="list" size={14} /></ToolCell></Solo>
    <FenceField>
      <FenceSelect aria-label="Selection mode" defaultValue="d"><option value="d">Directional Fence</option></FenceSelect>
      <Chevron width="7" height="5" viewBox="0 0 7 5"><path d="M.5 1l3 3l3 -3" fill="none" stroke="#555" /></Chevron>
    </FenceField>
    <Pair>
      <ToolCell type="button" aria-label="Rectangular fence" $tone="amber"><Icon name="fence" /></ToolCell>
      <ToolCell type="button" aria-label="Polygon fence" $tone="blue"><Icon name="polyFence" /></ToolCell>
    </Pair>
    <Pair>
      <ToolCell type="button" aria-label="Back" $tone="grey"><Icon name="back" size={14} /></ToolCell>
      <ToolCell type="button" aria-label="Forward" $tone="grey"><Icon name="forward" size={14} /></ToolCell>
    </Pair>
    <Pair>
      <ToolCell type="button" aria-label="Accept" $tone="grey"><Icon name="accept" size={15} /></ToolCell>
      <ToolCell type="button" aria-label="Cancel" $tone="grey"><Icon name="cancel" size={15} /></ToolCell>
    </Pair>
  </CommandBar>
);

const RecorderDialog = () => (
  <Recorder>
    <RecorderHead>
      Record Video
      <IconButton type="button" aria-label="Close" $w={12}>
        <Svg width="10" height="10" viewBox="0 0 10 10"><path d="M1 1l8 8M9 1l-8 8" stroke="#888" /></Svg>
      </IconButton>
    </RecorderHead>
    <RecorderBody>
      <div>
        Recording
        <RecordButtons>
          <RecordButton type="button" aria-label="Pause">
            <Svg width="14" height="14" viewBox="0 0 14 14"><circle cx="7" cy="7" r="5.500" fill="#cfe07a" stroke="#a9bd5c" /><path d="M5.500 4.500v5M8.500 4.500v5" stroke="#555" strokeWidth="1.500" /></Svg>
          </RecordButton>
          <RecordButton type="button" aria-label="Stop">
            <Svg width="14" height="14" viewBox="0 0 14 14"><circle cx="7" cy="7" r="5.500" fill="#cfe07a" stroke="#a9bd5c" /><path d="M5 5h4v4h-4z" fill="#555" /></Svg>
          </RecordButton>
        </RecordButtons>
      </div>
      <Fields>
        <Field>Duration:<FieldValue readOnly value="00:01:02" /></Field>
        <Field>File size:<FieldValue readOnly value="4.1 MB" /></Field>
      </Fields>
    </RecorderBody>
  </Recorder>
);

export default function App() {
  return (
    <Page>
      <GlobalStyle />
      <Window>
        <Header>
          <TitleBar>
            <QuickAccess>
              <Tool name="save" /><Rule />
              <Tool name="undo" /><Caret />
              <Tool name="undoAll" w={18} /><Tool name="redo" w={16} /><Caret />
              <Tool name="customize" w={32} />
            </QuickAccess>
            <Title>Solid Edge ST10 - Sketch - [Part4: Sketch]</Title>
            <WindowButtons $gap={8} $end={4}>
              <Tool name="minimize" /><Tool name="restore" /><Tool name="close" />
            </WindowButtons>
          </TitleBar>
          <TabRow>
            <Tabs>
              <Tab href="#home" $active>Home</Tab>
              <Tab href="#inspect">Inspect</Tab>
              <Tab href="#tools">Tools</Tab>
              <Tab href="#view">View</Tab>
              <Tab href="#data">Data Management</Tab>
            </Tabs>
            <WindowButtons $gap={0}>
              <Tool name="help" /><Tool name="winBack" /><Tool name="winFront" w={18} />
              <IconButton type="button" aria-label="Minimize document" $w={12}><Icon name="minimize" size={8} /></IconButton>
              <IconButton type="button" aria-label="Restore document" $w={14}><Icon name="restore" size={9} /></IconButton>
              <IconButton type="button" aria-label="Close document" $w={14}><Icon name="closeDark" size={9} /></IconButton>
            </WindowButtons>
          </TabRow>
        </Header>
        <AppButton type="button" aria-label="Application menu">
          <Svg width="20" height="20" viewBox="0 0 20 20">
            <path d="M3 6l7 4l7 -4v6l-6 3z" fill="#b5d8f5" />
            <path d="M3 6l7 8l1 -4z" fill="#d6eafb" />
            <path d="M10 9l7 -4v7h-6z" fill="#6fb0ea" />
            <path d="M6 11l4 6l5 -5l-5 -1z" fill="#2f6cb8" />
          </Svg>
        </AppButton>
        <RibbonBar />
        <Work>
          <Rail $side="left">
            <RailTab type="button" $h={93}><Icon name="railLibrary" size={18} /><RailText>Feature Library</RailText></RailTab>
            <RailButton type="button" aria-label="Family of Parts"><Icon name="railParts" /></RailButton>
            <RailButton type="button" aria-label="Sensors"><Icon name="railSensors" /></RailButton>
            <RailButton type="button" aria-label="Playback"><Icon name="railVideo" size={18} /></RailButton>
          </Rail>
          <Center>
            <DocTabs>
              <DocTab type="button"><Icon name="docFile" size={14} />Part4: Sketch</DocTab>
              <DocNav>
                <Svg width="26" height="8" viewBox="0 0 26 8">
                  <path d="M4.500 1.500v5l-3 -2.500zM11.500 1.500v5l3 -2.500z" fill="none" stroke="#999" />
                  <path d="M20 3h5l-2.500 3z" fill="#666" />
                </Svg>
              </DocNav>
            </DocTabs>
            <Body>
              <FeatureTree />
              <View>
                <SketchDrawing />
                <Solo><GreenButton type="button" aria-label="Close Sketch"><FinishGlyph /></GreenButton></Solo>
                <Commands />
                <ViewCube width="47" height="47" viewBox="0 0 47 47">
                  <rect x=".5" y=".5" width="46" height="46" fill="#fdfdfd" stroke="#b8b8b8" />
                  <text x="24" y="28" textAnchor="middle" fontSize="11" fill="#555">FRONT</text>
                  <path d="M23.500 23v-18" stroke="#8878dc" strokeWidth="1.200" />
                  <path d="M23.500 3l-2 6h4z" fill="#8878dc" />
                  <path d="M24 24h18" stroke="#e06868" />
                  <path d="M44 24l-5 -1.500v3z" fill="#e06868" />
                  <circle cx="23.500" cy="24" r="2.500" fill="#e6d250" stroke="#b39c30" />
                </ViewCube>
              </View>
            </Body>
          </Center>
          <Rail $side="right">
            <RailTab type="button" $h={118}><Icon name="learn" /><RailText>Learn Solid Edge</RailText></RailTab>
            <YouTube href="#youtube">You<Tube>Tube</Tube></YouTube>
            <RailButton type="button" aria-label="Facebook"><Icon name="facebook" /></RailButton>
            <RailButton type="button" aria-label="News"><Icon name="news" /></RailButton>
          </Rail>
        </Work>
        <StatusBar>
          <Prompt>Click elements, drag right for inside fence, drag left for inside/overlapping fence, or Alt+click to place first</Prompt>
          <Find type="text" placeholder="Find a command" aria-label="Find a command" />
          <StatusTools>
            {statusTools.map((n) => (
              <StatusButton key={n} type="button" aria-label={n}><Icon name={n} size={14} /></StatusButton>
            ))}
            <StatusButton type="button" aria-label="Zoom out"><Icon name="zoomOut" size={14} /></StatusButton>
            <Slider type="range" min={0} max={100} defaultValue={15} aria-label="Zoom" />
            <StatusButton type="button" aria-label="Zoom in"><Icon name="zoomIn" size={14} /></StatusButton>
            <StatusButton type="button" aria-label="Record"><Icon name="record" size={14} /></StatusButton>
            <StatusButton type="button" aria-label="Upload"><Icon name="upload" size={14} /></StatusButton>
          </StatusTools>
        </StatusBar>
        <RecorderDialog />
      </Window>
    </Page>
  );
}
